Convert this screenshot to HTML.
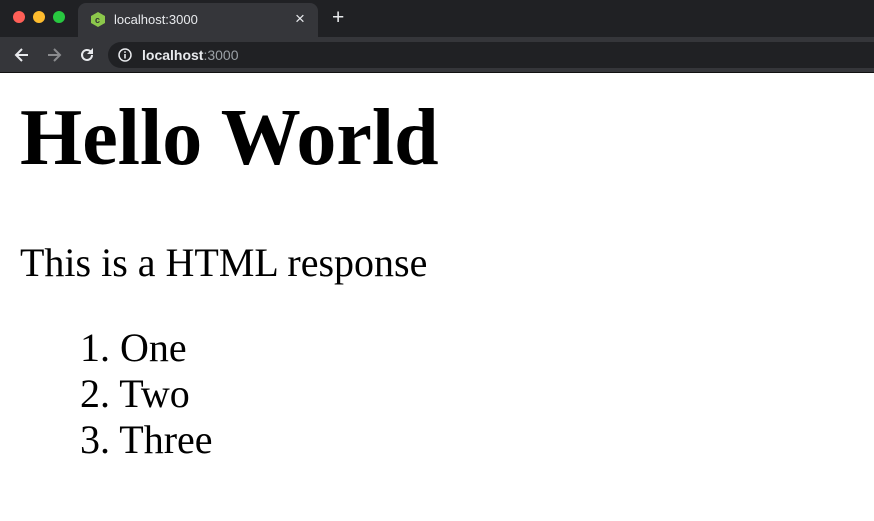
<!DOCTYPE html>
<html><head><style>
body{margin:0;width:874px;height:521px;overflow:hidden;background:#fff;font-family:"Liberation Serif",serif;position:relative}
.tabbar{position:absolute;left:0;top:0;width:874px;height:37px;background:#202124}
.tab{position:absolute;left:78px;top:3px;width:240px;height:34px;background:#35363a;border-radius:8px 8px 0 0}
.toolbar{position:absolute;left:0;top:37px;width:874px;height:35px;background:#35363a;border-bottom:1px solid #111}
.addr{position:absolute;left:108px;top:5px;width:800px;height:26px;background:#202124;border-radius:13px}
.ui{font-family:"Liberation Sans",sans-serif;color:#e8eaed;position:absolute}
.dot{position:absolute;top:11px;width:12px;height:12px;border-radius:50%}
.t{position:absolute;left:0;white-space:nowrap;color:#000}
</style></head><body>
<div class="tabbar">
<div class="dot" style="left:13px;background:#ff5f57"></div>
<div class="dot" style="left:33px;background:#febc2e"></div>
<div class="dot" style="left:53px;background:#28c840"></div>
<div class="tab">
<svg style="position:absolute;left:13px;top:9px" width="14" height="15" viewBox="0 0 14 15"><polygon points="7,0 14,4 14,11 7,15 0,11 0,4" fill="#8cc84b"/><text x="4" y="11" font-size="9" font-family="Liberation Sans" font-weight="bold" fill="#333">c</text></svg>
<div class="ui" style="left:36px;top:9px;font-size:13px">localhost:3000</div>
<div class="ui" style="left:217px;top:6px;font-size:17px">×</div>
</div>
<div class="ui" style="left:332px;top:6px;font-size:21px">+</div>
</div>
<div class="toolbar">
<svg style="position:absolute;left:14px;top:10px" width="16" height="16" viewBox="0 0 16 16"><path d="M14 8H2M8 2L2 8l6 6" fill="none" stroke="#e8eaed" stroke-width="2"/></svg>
<svg style="position:absolute;left:46px;top:10px" width="16" height="16" viewBox="0 0 16 16"><path d="M2 8h12M8 2l6 6-6 6" fill="none" stroke="#8a8b8e" stroke-width="2"/></svg>
<svg style="position:absolute;left:79px;top:10px" width="16" height="16" viewBox="0 0 16 16"><path d="M13 8a5 5 0 1 1-1.5-3.6" fill="none" stroke="#e8eaed" stroke-width="2"/><path d="M14 1v6h-6z" fill="#e8eaed"/></svg>
<div class="addr">
<svg style="position:absolute;left:10px;top:6px" width="14" height="14" viewBox="0 0 14 14"><circle cx="7" cy="7" r="6" fill="none" stroke="#e8eaed" stroke-width="1.5"/><rect x="6.2" y="6" width="1.6" height="4.5" fill="#e8eaed"/><rect x="6.2" y="3.3" width="1.6" height="1.6" fill="#e8eaed"/></svg>
<div class="ui" style="left:34px;top:5px;font-size:14px;font-weight:bold">localhost<span style="color:#9aa0a6;font-weight:normal">:3000</span></div>
</div>
</div>
<div class="t" style="left:20px;top:93px;font-size:80px;font-weight:bold;line-height:90px">Hello World</div>
<div class="t" style="left:20px;top:240px;font-size:40px;line-height:46px">This is a HTML response</div>
<div class="t" style="left:80px;top:325px;font-size:40px;line-height:46px">1. One<br>2. Two<br>3. Three</div>
</body></html>
